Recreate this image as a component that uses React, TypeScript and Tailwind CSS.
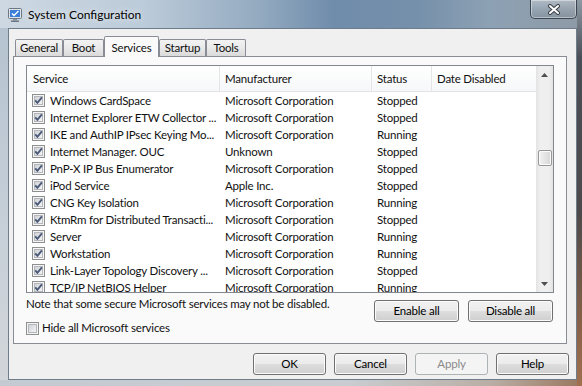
import React from "react";

type Row = [string, string, string];

const rows: Row[] = [
  ["Windows CardSpace", "Microsoft Corporation", "Stopped"],
  ["Internet Explorer ETW Collector ...", "Microsoft Corporation", "Stopped"],
  ["IKE and AuthIP IPsec Keying Mo...", "Microsoft Corporation", "Running"],
  ["Internet Manager. OUC", "Unknown", "Stopped"],
  ["PnP-X IP Bus Enumerator", "Microsoft Corporation", "Stopped"],
  ["iPod Service", "Apple Inc.", "Stopped"],
  ["CNG Key Isolation", "Microsoft Corporation", "Running"],
  ["KtmRm for Distributed Transacti...", "Microsoft Corporation", "Stopped"],
  ["Server", "Microsoft Corporation", "Running"],
  ["Workstation", "Microsoft Corporation", "Running"],
  ["Link-Layer Topology Discovery ...", "Microsoft Corporation", "Stopped"],
  ["TCP/IP NetBIOS Helper", "Microsoft Corporation", "Running"],
];

function Check({ checked }: { checked: boolean }) {
  return (
    <svg width="13" height="13" viewBox="0 0 13 13" className="shrink-0">
      <defs>
        <linearGradient id="cbfill" x1="0" y1="0" x2="1" y2="1">
          <stop offset="0" stopColor="#cdd0d4" />
          <stop offset="1" stopColor="#f7f7f7" />
        </linearGradient>
      </defs>
      <rect x="0.5" y="0.5" width="12" height="12" fill="#f4f4f4" stroke="#8e8f8f" />
      <rect x="2.5" y="2.5" width="8" height="8" fill="url(#cbfill)" stroke="#b4b8bd" />
      {checked && (
        <path d="M3.2 6.4 L5.4 8.9 L9.9 3.4" fill="none" stroke="#4a5a78" strokeWidth="1.9" />
      )}
    </svg>
  );
}

function Btn({ label, w, disabled }: { label: string; w: string; disabled?: boolean }) {
  return (
    <button
      className={
        w +
        " h-[22px] rounded-[3px] border leading-none " +
        (disabled
          ? "border-[#adb2b5] bg-[#f4f4f4] text-[#8a8a8a]"
          : "border-[#707070] bg-[linear-gradient(180deg,#f2f2f2_0%,#ebebeb_48%,#dddddd_52%,#cfcfcf_100%)] shadow-[inset_0_0_0_1px_#fbfbfb] text-black")
      }
    >
      {label}
    </button>
  );
}

function Tab({ label, w, active }: { label: string; w: string; active?: boolean }) {
  if (active) {
    return (
      <div className={w + " relative z-10 -mb-px h-[21px] border border-b-0 border-[#898c95] rounded-t-[2px] bg-[#fafafa] flex justify-center pt-[2px]"}>
        {label}
      </div>
    );
  }
  return (
    <div className={w + " h-[17px] border border-b-0 border-[#898c95] rounded-t-[2px] bg-[linear-gradient(180deg,#f3f3f3,#e9e9e9_50%,#dadada)] flex items-center justify-center"}>
      {label}
    </div>
  );
}

function Arrow({ up }: { up?: boolean }) {
  return (
    <svg width="7" height="4" viewBox="0 0 7 4">
      <path d={up ? "M0 4 L3.5 0 L7 4 Z" : "M0 0 L3.5 4 L7 0 Z"} fill="#505050" />
    </svg>
  );
}

export default function App() {
  return (
    <div className="flex w-[582px] h-[386px] overflow-hidden [font-family:Lato,'Liberation_Sans',sans-serif] text-[11.5px] tracking-[-0.2px] text-[#111]">
      <div className="flex flex-col w-[577px]">
        {/* title bar */}
        <div className="h-[28px] flex bg-[linear-gradient(90deg,#cdd8e2_0%,#bccbd9_25%,#93aac0_45%,#6f8cab_58%,#7590aa_72%,#8da1b4_85%,#8e9aa6_100%)]">
          <div className="flex items-center gap-[6px] pl-[8px] pt-[2px]">
            <svg width="14" height="14" viewBox="0 0 14 14">
              <rect x="0.5" y="0.5" width="13" height="10" rx="1" fill="#dfe4ea" stroke="#6d7784" />
              <rect x="2" y="2" width="10" height="7" fill="#3d7fd8" />
              <path d="M4 5.5 L6 7.5 L10.5 3" fill="none" stroke="#fff" strokeWidth="1.4" />
              <rect x="5" y="11" width="4" height="1.5" fill="#8a929c" />
              <rect x="3" y="12.5" width="8" height="1.5" fill="#6d7784" />
            </svg>
            <span className="text-[12px] tracking-normal text-black [text-shadow:0_0_6px_rgba(255,255,255,0.9)]">System Configuration</span>
          </div>
          <div className="ml-auto w-[47px] h-[19px] flex items-center justify-center border border-t-0 border-[#3b4652] rounded-b-[5px] bg-[linear-gradient(180deg,rgba(255,255,255,0.3),rgba(255,255,255,0.08)_50%,rgba(0,0,0,0.06))] shadow-[inset_0_0_0_1px_rgba(255,255,255,0.4)]">
            <svg width="14" height="11" viewBox="0 0 14 11">
              <path d="M3 2 L11 9 M11 2 L3 9" stroke="#3a3f46" strokeWidth="4" strokeLinecap="round" />
              <path d="M3 2 L11 9 M11 2 L3 9" stroke="#ffffff" strokeWidth="2" strokeLinecap="round" />
            </svg>
          </div>
        </div>

        <div className="flex h-[352px]">
          <div className="w-[8px] bg-[linear-gradient(180deg,#b5c3d0,#c6cfd8_55%,#d2d6da)]" />
          {/* client area */}
          <div className="w-[569px] flex flex-col border border-[#6f7d8b] bg-[#f0f0f0]">
            <div className="flex items-end h-[27px] pl-[6px]">
              <Tab label="General" w="w-[48px]" />
              <Tab label="Boot" w="w-[41px]" />
              <Tab label="Services" w="w-[55px]" active />
              <Tab label="Startup" w="w-[47px]" />
              <Tab label="Tools" w="w-[40px]" />
            </div>

            <div className="ml-[4px] w-[554px] h-[288px] border border-[#898c95] bg-[#fafafa] flex flex-col px-[12px] pt-[8px]">
              {/* list view */}
              <div className="w-[528px] h-[228px] shrink-0 border border-[#828790] bg-white flex">
                <div className="flex-1 flex flex-col overflow-hidden">
                  <div className="grid grid-cols-[193px_152px_60px_103px] h-[26px] shrink-0 border-b border-[#e3e3e3] bg-[linear-gradient(180deg,#ffffff,#f6f7f9)]">
                    <div className="flex items-center pl-[6px] border-r border-[#e5e5e5]">Service</div>
                    <div className="flex items-center pl-[5px] border-r border-[#e5e5e5]">Manufacturer</div>
                    <div className="flex items-center pl-[5px] border-r border-[#e5e5e5]">Status</div>
                    <div className="flex items-center pl-[5px]">Date Disabled</div>
                  </div>
                  {rows.map((r, i) => (
                    <div key={i} className="grid grid-cols-[193px_152px_60px_103px] h-[17px] shrink-0 items-center">
                      <div className="flex items-center gap-[5px] pl-[5px] whitespace-nowrap overflow-hidden">
                        <Check checked />
                        <span>{r[0]}</span>
                      </div>
                      <div className="pl-[5px] whitespace-nowrap overflow-hidden">{r[1]}</div>
                      <div className="pl-[5px] whitespace-nowrap">{r[2]}</div>
                      <div />
                    </div>
                  ))}
                </div>
                {/* scrollbar */}
                <div className="w-[17px] flex flex-col bg-[linear-gradient(90deg,#e3e3e3,#efefef_25%,#efefef_75%,#e3e3e3)]">
                  <div className="h-[17px] flex items-center justify-center">
                    <Arrow up />
                  </div>
                  <div className="flex-1">
                    <div className="mt-[67px] ml-[2px] w-[14px] h-[16px] rounded-[2px] border border-[#979797] bg-[linear-gradient(90deg,#f3f3f3,#e4e4e4_50%,#d6d6d6)] shadow-[inset_0_0_0_1px_#fbfbfb]" />
                  </div>
                  <div className="h-[17px] flex items-center justify-center">
                    <Arrow />
                  </div>
                </div>
              </div>

              <div className="flex justify-between mt-[3px]">
                <div className="flex flex-col">
                  <div className="h-[16px] leading-[16px] whitespace-nowrap">
                    Note that some secure Microsoft services may not be disabled.
                  </div>
                  <div className="flex items-center gap-[3px] mt-[8px] h-[16px]">
                    <Check checked={false} />
                    <span>Hide all Microsoft services</span>
                  </div>
                </div>
                <div className="flex gap-[9px] mt-[4px] mr-[1px]">
                  <Btn label="Enable all" w="w-[85px]" />
                  <Btn label="Disable all" w="w-[85px]" />
                </div>
              </div>
            </div>

            <div className="flex justify-end gap-[8px] pr-[7px] mt-[9px]">
              <Btn label="OK" w="w-[73px]" />
              <Btn label="Cancel" w="w-[73px]" />
              <Btn label="Apply" w="w-[73px]" disabled />
              <Btn label="Help" w="w-[73px]" />
            </div>
          </div>
        </div>
        <div className="h-[6px] bg-[linear-gradient(90deg,#c3cad1,#c9cdd1_60%,#b9aea5_85%,#9b7a62)]" />
      </div>
      <div className="w-[5px] bg-[linear-gradient(180deg,#8d99a4,#4a4e56_15%,#4d4a4b_55%,#8a6248_85%,#a0704f)]" />
    </div>
  );
}
